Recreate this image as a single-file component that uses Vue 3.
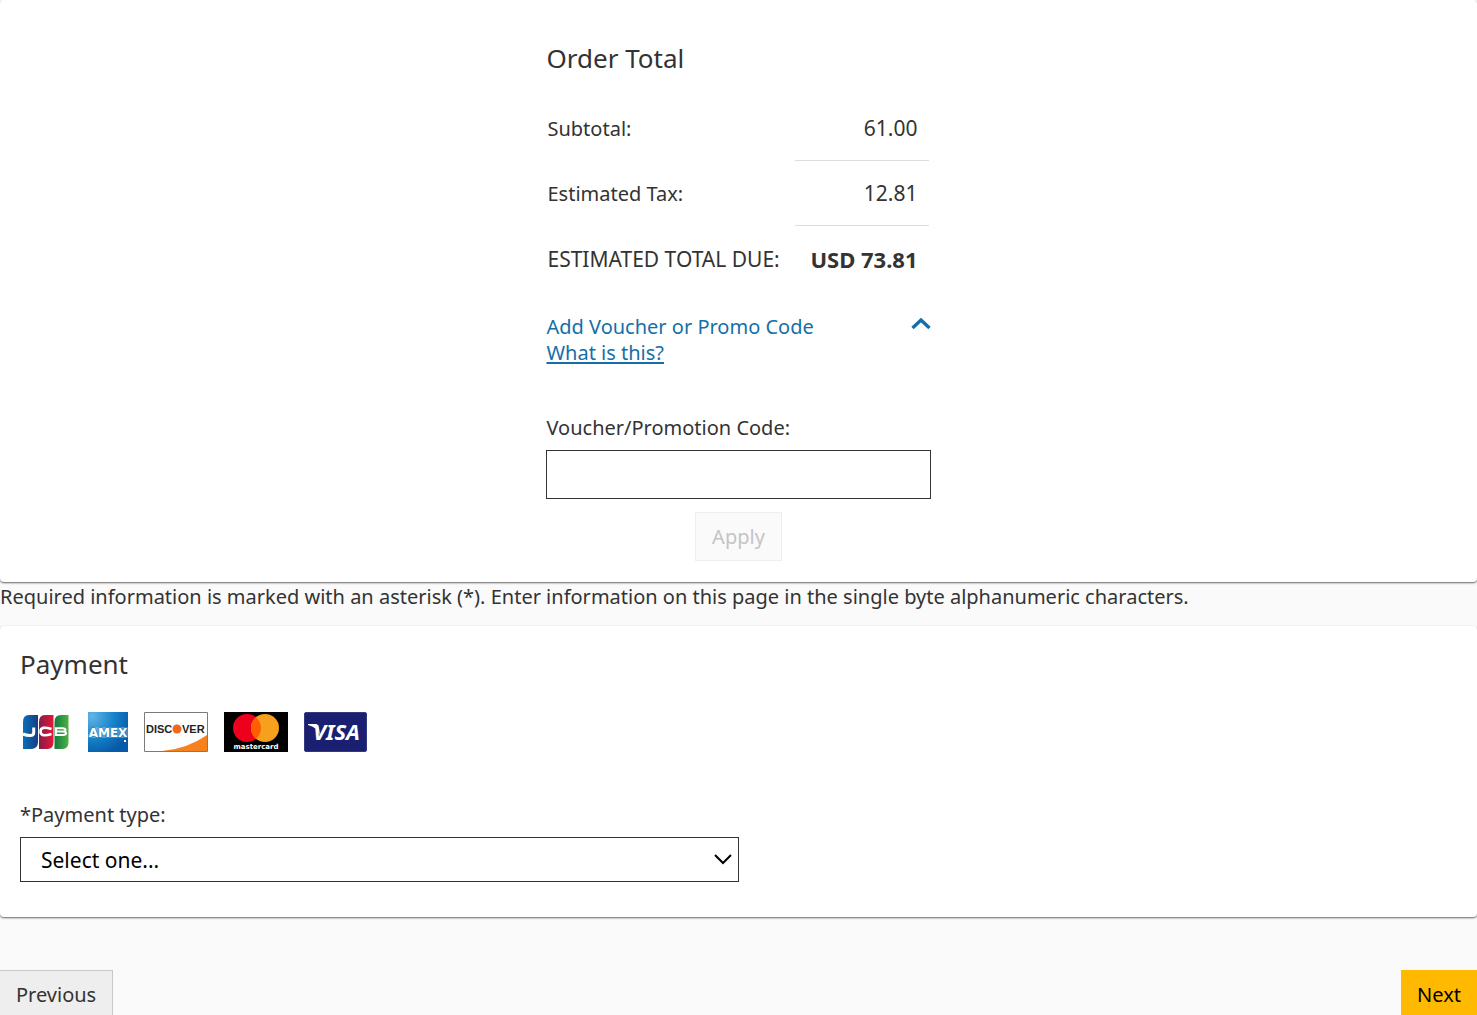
<script setup>
import { ref } from 'vue'

const voucherCode = ref('')
const paymentType = ref('')
const lines = [
  { label: 'Subtotal:', value: '61.00' },
  { label: 'Estimated Tax:', value: '12.81' },
]
</script>

<template>
  <main class="page">
    <section class="card order">
      <div class="order-column">
        <h2>Order Total</h2>
        <table class="totals">
          <tbody>
            <tr v-for="line in lines" :key="line.label">
              <th scope="row">{{ line.label }}</th>
              <td>{{ line.value }}</td>
            </tr>
            <tr class="due">
              <th scope="row">ESTIMATED TOTAL DUE:</th>
              <td>USD 73.81</td>
            </tr>
          </tbody>
        </table>
        <div class="promo">
          <div class="promo-links">
            <a href="#voucher" class="toggle">Add Voucher or Promo Code</a>
            <a href="#help">What is this?</a>
          </div>
          <svg class="chevron-up" width="20" height="13" viewBox="0 0 20 13" aria-hidden="true">
            <path d="M1.500 11 10 3l8.500 8" fill="none" stroke="#146fa9" stroke-width="3.400" />
          </svg>
        </div>
        <label for="voucher">Voucher/Promotion Code:</label>
        <input id="voucher" v-model="voucherCode" type="text" />
        <button type="button" class="apply" disabled>Apply</button>
      </div>
    </section>

    <p class="note">Required information is marked with an asterisk (*). Enter information on this page in the single byte alphanumeric characters.</p>

    <section class="card payment">
      <h2>Payment</h2>
      <div class="brands">
        <svg width="52" height="40" viewBox="0 0 52 40" role="img" aria-label="JCB">
          <defs>
            <linearGradient id="jb"><stop offset="0" stop-color="#0870b8" /><stop offset="1" stop-color="#183d86" /></linearGradient>
            <linearGradient id="jr"><stop offset="0" stop-color="#851c48" /><stop offset="1" stop-color="#e71638" /></linearGradient>
            <linearGradient id="jg"><stop offset="0" stop-color="#137a3c" /><stop offset="1" stop-color="#4fb146" /></linearGradient>
          </defs>
          <path d="M9 3h9v27q0 7-7 7H3V10q0-7 6-7Z" fill="url(#jb)" />
          <path d="M25 3h8.500v27q0 7-6 7h-8.500V10q0-7 6-7Z" fill="url(#jr)" />
          <path d="M41 3h7.500v27q0 7-6 7H34.500V10q0-7 6.500-7Z" fill="url(#jg)" />
          <path d="M13.700 15.500v5.500q0 2.500-3.700 2.500-3.500 0-7-1.500" fill="none" stroke="#fff" stroke-width="3" />
          <path d="M31.500 17q-11-3.500-11 2.500t11 2.500" fill="none" stroke="#fff" stroke-width="2.600" />
          <path d="M36 16.300h6.500q3 0 3 1.600t-3 1.700H36h7q3 0 3 1.700t-3 1.700h-7Z" fill="none" stroke="#fff" stroke-width="2" />
        </svg>
        <svg width="40" height="40" viewBox="0 0 40 40" role="img" aria-label="American Express">
          <defs>
            <radialGradient id="ax" cx=".1" cy=".1" r="1"><stop offset="0" stop-color="#62b4e5" /><stop offset=".55" stop-color="#1683ca" /><stop offset="1" stop-color="#075aa7" /></radialGradient>
          </defs>
          <rect width="40" height="40" fill="url(#ax)" />
          <path d="M0 23 5 15h35v11H0Z" fill="#a9d2ed" opacity=".4" />
          <text class="amex-text" x="20" y="25" text-anchor="middle">AMEX</text>
          <path d="M36 28h2v2h-2Z" fill="#fff" />
        </svg>
        <svg width="64" height="40" viewBox="0 0 64 40" role="img" aria-label="Discover">
          <path d="M.5.500h63v39H.5Z" fill="#fff" stroke="#7b7b7b" />
          <path d="M18 39Q43 37 63 23v16Z" fill="#f5811f" />
          <text class="discover-text" x="2" y="21">DISC</text>
          <circle cx="33" cy="17" r="4.500" fill="#ef6820" />
          <text class="discover-text" x="38" y="21">VER</text>
        </svg>
        <svg width="64" height="40" viewBox="0 0 64 40" role="img" aria-label="Mastercard">
          <rect width="64" height="40" />
          <circle cx="23" cy="16" r="14" fill="#ec001b" />
          <circle cx="41" cy="16" r="14" fill="#f7a01d" />
          <path d="M32 5.300a14 14 0 0 1 0 21.400a14 14 0 0 1 0-21.400Z" fill="#ff5f00" />
          <text class="mc-text" x="32" y="37" text-anchor="middle">mastercard</text>
        </svg>
        <svg width="64" height="40" viewBox="0 0 64 40" role="img" aria-label="Visa">
          <rect x=".5" y=".5" width="62" height="39" rx="1.500" fill="#1a1f71" stroke="#33387f" />
          <path d="M4 12h8q2 0 3 4l1 7q-3-8-12-10Z" fill="#fff" />
          <text class="visa-text" x="9" y="28">VISA</text>
        </svg>
      </div>
      <label for="payment-type">*Payment type:</label>
      <div class="select-box">
        <select id="payment-type" v-model="paymentType">
          <option value="">Select one...</option>
        </select>
        <svg width="20" height="12" viewBox="0 0 20 12" aria-hidden="true">
          <path d="m2 2 8 8 8-8" fill="none" stroke="#000" stroke-width="2" />
        </svg>
      </div>
    </section>

    <nav class="actions">
      <button type="button" class="previous">Previous</button>
      <button type="button" class="next">Next</button>
    </nav>
  </main>
</template>

<style>
html,
body {
  height: 100%;
  background: #fafafa;
}
body {
  margin: 0;
  overflow: hidden;
}
</style>

<style scoped>
* {
  box-sizing: border-box;
}
.page {
  color: #333;
  font: 20px/26px "Noto Sans", "Open Sans", sans-serif;
}
.card {
  background: #fff;
  border-radius: 4px;
  box-shadow: 0 1px 2px rgba(0, 0, 0, 0.6);
}
.order {
  display: flex;
  justify-content: center;
  padding: 40px 0 21px;
}
.order-column {
  width: 26%;
  display: flex;
  flex-direction: column;
}
h2 {
  margin: 0;
  font-size: 26px;
  line-height: 36px;
  font-weight: 400;
}
.totals {
  margin: 20px 2px 0 1px;
  border-spacing: 0;
}
th,
td {
  height: 65px;
  padding: 0;
  font-weight: 400;
  white-space: nowrap;
}
th {
  text-align: left;
}
td {
  width: 134px;
  padding-right: 11px;
  font-size: 21px;
  text-align: right;
  border-bottom: 1px solid #ddd;
}
.due th {
  font-size: 21px;
}
.due td {
  font-size: 22px;
  font-weight: 700;
  border-bottom: 0;
}
.promo {
  display: flex;
  justify-content: space-between;
  margin: 23px 0 49px;
}
.promo-links {
  display: flex;
  flex-direction: column;
  align-items: flex-start;
}
a {
  color: #146fa9;
  text-decoration-thickness: 2px;
  text-underline-offset: 2px;
}
.toggle {
  text-decoration: none;
}
.chevron-up {
  margin-top: 3px;
}
input {
  height: 49px;
  width: 100%;
  margin: 9px 0 13px;
  padding: 0 16px;
  border: 1px solid #333;
  background: #fff;
  font: inherit;
}
button {
  height: 49px;
  padding: 0 16px;
  font: inherit;
  color: #333;
}
.apply {
  align-self: center;
  border: 1px solid #eee;
  background: #fafafa;
  color: #c4c4c4;
}
.note {
  margin: 2px 0 16px;
}
.payment {
  padding: 20px 20px 35px;
}
.brands {
  display: flex;
  gap: 16px;
  margin: 30px 0 50px;
}
.payment label {
  display: block;
}
.amex-text,
.mc-text {
  font-family: "DejaVu Sans", sans-serif;
  font-weight: 700;
  fill: #fff;
}
.amex-text {
  font-size: 12px;
  stroke: #1674b9;
  stroke-width: 1px;
  paint-order: stroke;
}
.mc-text {
  font-size: 7px;
}
.discover-text {
  font: 700 11px "Liberation Sans", Arial, sans-serif;
  fill: #222;
}
.visa-text {
  font: italic 700 22px "Noto Sans", sans-serif;
  fill: #fff;
}
.select-box {
  position: relative;
  width: 50%;
  margin-top: 9px;
}
select {
  display: block;
  width: 100%;
  height: 45px;
  padding: 0 20px;
  appearance: none;
  border: 1px solid #333;
  border-radius: 0;
  background: #fff;
  color: #000;
  font: inherit;
  font-size: 21px;
}
.select-box svg {
  position: absolute;
  right: 6px;
  top: 16px;
  pointer-events: none;
}
.actions {
  display: flex;
  justify-content: space-between;
  margin-top: 53px;
}
.previous {
  border: 1px solid #c8c8c8;
  border-left: 0;
  background: #eee;
}
.next {
  border: 0;
  background: #ffb900;
  color: #000;
}
</style>
